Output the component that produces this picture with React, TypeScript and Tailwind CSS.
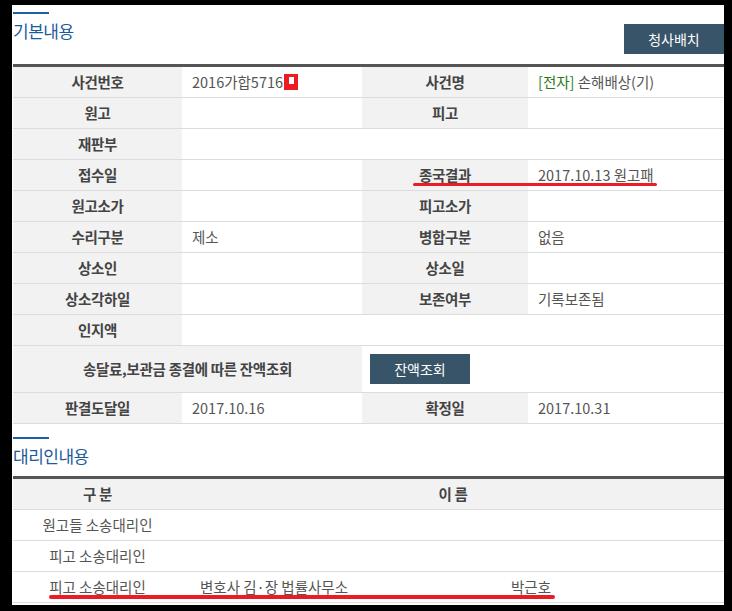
import React from "react";

type Cell = { text?: React.ReactNode; label?: boolean; span?: string };

const labelCls =
  "h-[31px] flex items-center justify-center bg-[#f2f2f2] text-[#444] font-semibold tracking-[-0.3px] border-b border-[#dcdcdc]";
const valueCls = "h-[31px] flex items-center pl-[10px] text-[#555] border-b border-[#dcdcdc]";
const plainCls = "h-[31px] flex items-center justify-center text-[#555] border-b border-[#dcdcdc]";

const rows: Cell[][] = [
  [
    { text: "사건번호", label: true },
    {
      text: (
        <span className="flex items-center">
          2016가합5716
          <span className="ml-[1px] w-[14px] h-[16px] bg-[#ed1c24] flex justify-center pt-[3px]">
            <span className="w-[5px] h-[7px] bg-white" />
          </span>
        </span>
      ),
    },
    { text: "사건명", label: true },
    {
      text: (
        <span>
          <span className="text-[#2a7a1a]">[전자]</span> 손해배상(기)
        </span>
      ),
    },
  ],
  [{ text: "원고", label: true }, {}, { text: "피고", label: true }, {}],
  [{ text: "재판부", label: true }, { span: "col-span-3" }],
  [
    { text: "접수일", label: true },
    {},
    { text: "종국결과", label: true },
    { text: "2017.10.13 원고패" },
  ],
  [{ text: "원고소가", label: true }, {}, { text: "피고소가", label: true }, {}],
  [
    { text: "수리구분", label: true },
    { text: "제소" },
    { text: "병합구분", label: true },
    { text: "없음" },
  ],
  [{ text: "상소인", label: true }, {}, { text: "상소일", label: true }, {}],
  [
    { text: "상소각하일", label: true },
    {},
    { text: "보존여부", label: true },
    { text: "기록보존됨" },
  ],
  [{ text: "인지액", label: true }, { span: "col-span-3" }],
];

function SectionTitle({ title }: { title: string }) {
  return (
    <div>
      <div className="w-[36px] h-[2px] bg-[#1f5fa8]" />
      <h2 className="mt-[5px] text-[17px] leading-[24px] text-[#1d5b9c] tracking-[-0.5px]">{title}</h2>
    </div>
  );
}

function DarkButton({ children, cls }: { children: React.ReactNode; cls: string }) {
  return (
    <button className={`bg-[#385468] text-white text-[14px] flex items-center justify-center ${cls}`}>
      {children}
    </button>
  );
}

export default function App() {
  return (
    <div
      className="w-[732px] h-[611px] bg-black pt-[5px] pl-[12px] pr-[8px] pb-[6px] text-[14.5px]"
      style={{ fontFamily: '"Noto Sans CJK KR", "Noto Sans", sans-serif' }}
    >
      <div className="relative h-full bg-white pl-[1px] overflow-hidden">
        {/* 기본내용 */}
        <div className="flex justify-between items-start pt-[7px]">
          <SectionTitle title="기본내용" />
          <DarkButton cls="mt-[12px] w-[100px] h-[30px]">청사배치</DarkButton>
        </div>

        <div className="mt-[10px] border-t-[3px] border-[#555] grid grid-cols-[169px_180px_166px_1fr]">
          {rows.map((row, i) =>
            row.map((c, j) => (
              <div key={`${i}-${j}`} className={`${c.label ? labelCls : valueCls} ${c.span ?? ""}`}>
                {c.text}
              </div>
            ))
          )}
          <div className={`${labelCls} col-span-2 !h-[47px]`}>송달료,보관금 종결에 따른 잔액조회</div>
          <div className="col-span-2 h-[47px] flex items-center pl-[8px] border-b border-[#dcdcdc]">
            <DarkButton cls="w-[100px] h-[30px]">잔액조회</DarkButton>
          </div>
          <div className={labelCls}>판결도달일</div>
          <div className={valueCls}>2017.10.16</div>
          <div className={labelCls}>확정일</div>
          <div className={valueCls}>2017.10.31</div>
        </div>

        {/* 대리인내용 */}
        <div className="mt-[13px]">
          <SectionTitle title="대리인내용" />
        </div>
        <div className="mt-[8px] border-t-[3px] border-[#555] grid grid-cols-[169px_184px_330px_1fr]">
          <div className={labelCls}>구 분</div>
          <div className={`${labelCls} col-span-3`}>이 름</div>
          {[
            ["원고들 소송대리인", "", ""],
            ["피고 소송대리인", "", ""],
            ["피고 소송대리인", "변호사 김·장 법률사무소", "박근호"],
          ].map((r, i) => (
            <React.Fragment key={i}>
              <div className={plainCls}>{r[0]}</div>
              <div className={plainCls}>{r[1]}</div>
              <div className={plainCls}>{r[2]}</div>
              <div className="h-[31px] border-b border-[#dcdcdc]" />
            </React.Fragment>
          ))}
        </div>

        {/* red annotation marks */}
        <div className="absolute left-[401px] top-[178px] w-[244px] h-[3px] rounded-full bg-[#ed1c24]" />
        <div className="absolute left-[37px] top-[590px] w-[506px] h-[4px] rounded-full bg-[#ed1c24]" />
      </div>
    </div>
  );
}
